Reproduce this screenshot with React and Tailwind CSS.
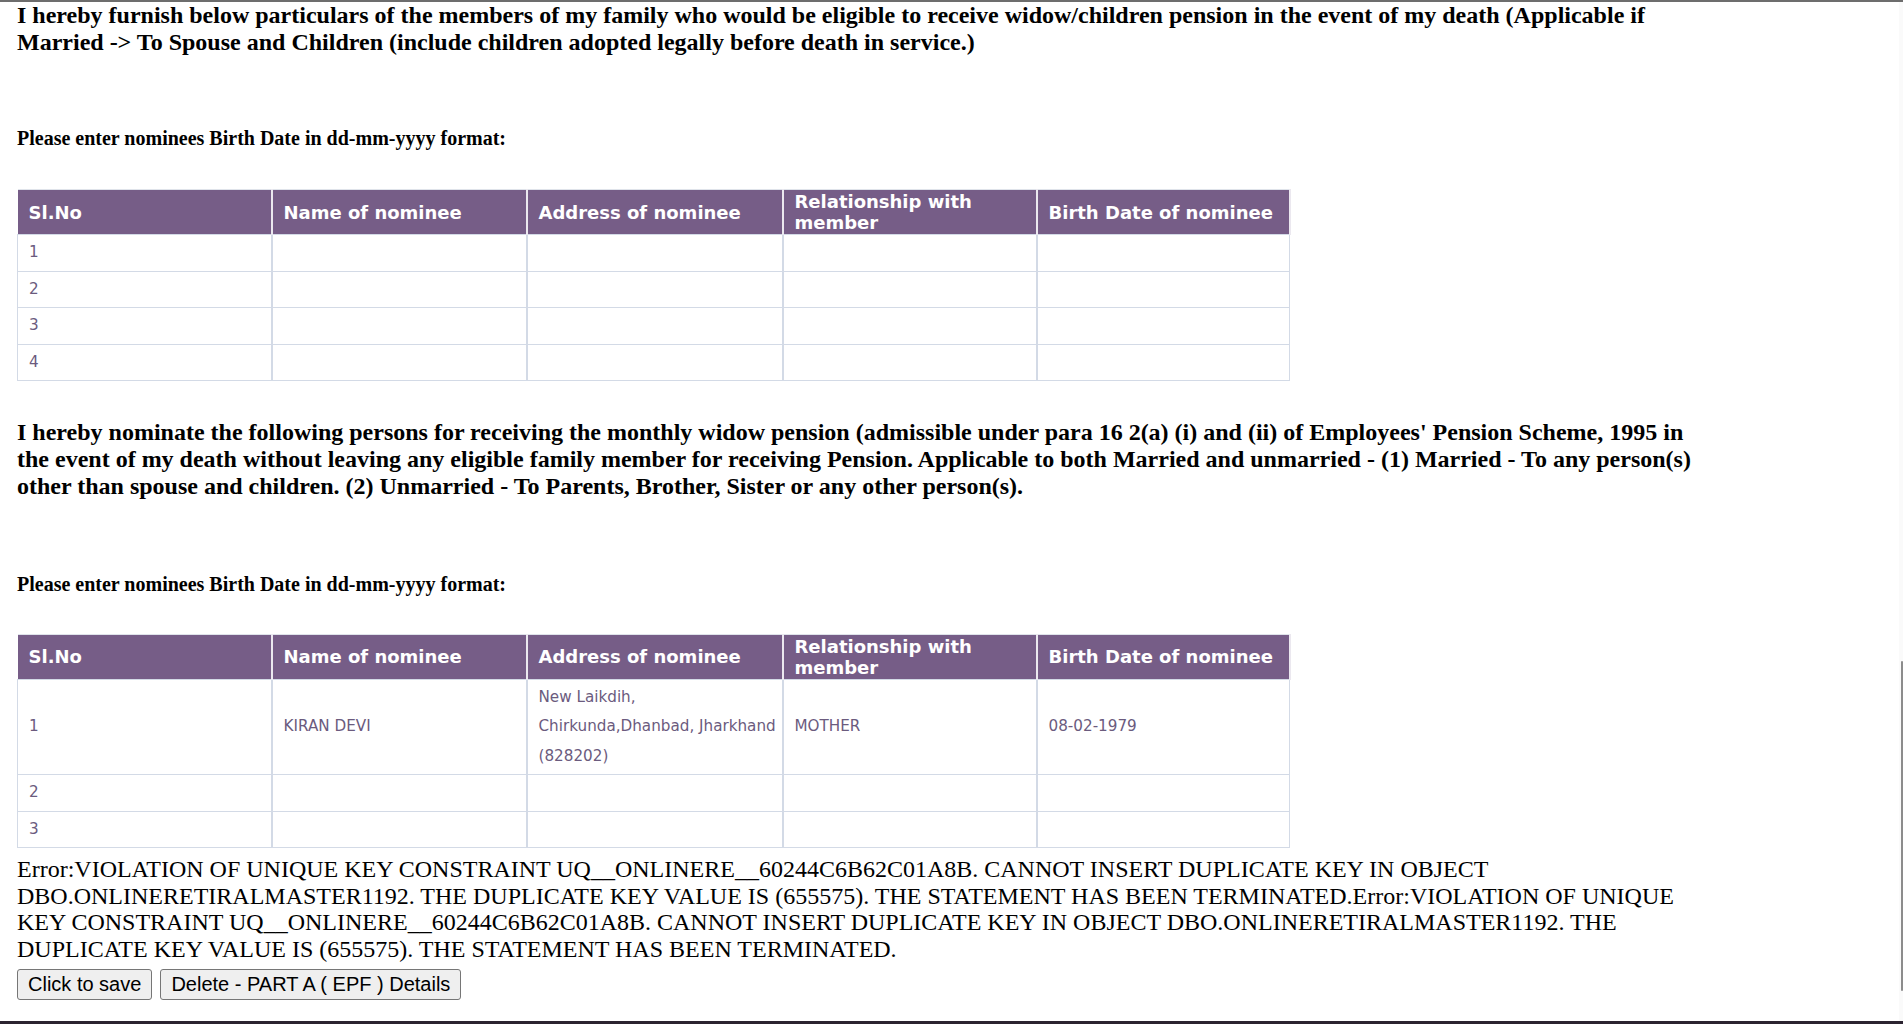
import React from "react";

const headers = [
  "Sl.No",
  "Name of nominee",
  "Address of nominee",
  "Relationship with member",
  "Birth Date of nominee",
];

const colWidths = ["w-[254px]", "w-[255px]", "w-[256px]", "w-[254px]", "w-[253px]"];

const firstRows = [
  { sl: "1" },
  { sl: "2" },
  { sl: "3" },
  { sl: "4" },
];

const secondRows = [
  {
    sl: "1",
    name: "KIRAN DEVI",
    address: ["New Laikdih,", "Chirkunda,Dhanbad, Jharkhand", "(828202)"],
    relation: "MOTHER",
    dob: "08-02-1979",
  },
  { sl: "2" },
  { sl: "3" },
];

const errorText =
  "Error:VIOLATION OF UNIQUE KEY CONSTRAINT UQ__ONLINERE__60244C6B62C01A8B. CANNOT INSERT DUPLICATE KEY IN OBJECT DBO.ONLINERETIRALMASTER1192. THE DUPLICATE KEY VALUE IS (655575). THE STATEMENT HAS BEEN TERMINATED.Error:VIOLATION OF UNIQUE KEY CONSTRAINT UQ__ONLINERE__60244C6B62C01A8B. CANNOT INSERT DUPLICATE KEY IN OBJECT DBO.ONLINERETIRALMASTER1192. THE DUPLICATE KEY VALUE IS (655575). THE STATEMENT HAS BEEN TERMINATED.";

const cell =
  "px-[11px] py-[3px] text-[15.2px] leading-[29.5px] text-[#6b5b7e] border-y border-x-2 border-[#d3dae6]";

const NomineeTable = ({ rows, className }) => {
  return (
    <table
      className={`w-[1272px] table-fixed border-collapse font-['DejaVu_Sans',sans-serif] ${className}`}
    >
      <colgroup>
        {colWidths.map((w, i) => (
          <col key={i} className={w} />
        ))}
      </colgroup>
      <thead>
        <tr>
          {headers.map((h) => (
            <th
              key={h}
              className="h-[45px] bg-[#765d87] text-white font-bold text-[18px] leading-[21px] text-left align-middle px-[11px] py-px border-x-2 border-x-[#ebe8ef] border-t border-t-[#dfe3ea] first:border-l-0"
            >
              {h}
            </th>
          ))}
        </tr>
      </thead>
      <tbody>
        {rows.map((row) => (
          <tr key={row.sl}>
            <td className={`${cell} first:border-l`}>{row.sl}</td>
            <td className={cell}>{row.name}</td>
            <td className={`${cell} whitespace-nowrap`}>
              {row.address &&
                row.address.map((line, i) => (
                  <React.Fragment key={i}>
                    {line}
                    {i < row.address.length - 1 && <br />}
                  </React.Fragment>
                ))}
            </td>
            <td className={cell}>{row.relation}</td>
            <td className={`${cell} last:border-r`}>{row.dob}</td>
          </tr>
        ))}
      </tbody>
    </table>
  );
};

export default function App() {
  return (
    <div className="h-[1024px] flex flex-col bg-white border-t-2 border-[#6d6d6d] overflow-hidden">
      <div className="flex flex-1 min-h-0">
        <main className="flex-1 pl-[17px] font-['Liberation_Serif',serif] text-black">
          <div className="w-[1690px]">
            {/* Family members section */}
            <p className="text-[24px] font-bold leading-[26.7px]">
              I hereby furnish below particulars of the members of my family who would be eligible to receive widow/children pension in the event of my death (Applicable if Married -&gt; To Spouse and Children (include children adopted legally before death in service.)
            </p>
            <p className="mt-[72px] text-[20px] font-bold leading-[23px]">
              Please enter nominees Birth Date in dd-mm-yyyy format:
            </p>
            <NomineeTable rows={firstRows} className="mt-[39px]" />

            {/* Other nominees section */}
            <p className="mt-[38px] text-[24px] font-bold leading-[26.7px]">
              I hereby nominate the following persons for receiving the monthly widow pension (admissible under para 16 2(a) (i) and (ii) of Employees' Pension Scheme, 1995 in the event of my death without leaving any eligible family member for receiving Pension. Applicable to both Married and unmarried - (1) Married - To any person(s) other than spouse and children. (2) Unmarried - To Parents, Brother, Sister or any other person(s).
            </p>
            <p className="mt-[73px] text-[20px] font-bold leading-[23px]">
              Please enter nominees Birth Date in dd-mm-yyyy format:
            </p>
            <NomineeTable rows={secondRows} className="mt-[38px]" />

            <p className="mt-[8px] text-[24px] leading-[26.7px]">{errorText}</p>

            <div className="mt-[6px] flex gap-2 font-['Liberation_Sans',Arial,sans-serif]">
              <button className="px-[10px] py-[3px] text-[20px] leading-[23px] text-black bg-[#efefef] border border-[#767676] rounded-[3px]">
                Click to save
              </button>
              <button className="px-[10px] py-[3px] text-[20px] leading-[23px] text-black bg-[#efefef] border border-[#767676] rounded-[3px]">
                Delete - PART A ( EPF ) Details
              </button>
            </div>
          </div>
        </main>
        <div className="w-[4px] bg-[#fafafa] flex justify-end pt-[659px]">
          <div className="w-[2px] h-[330px] bg-[#8c8c8c] rounded-full" />
        </div>
      </div>
      <div className="h-[3px] bg-[#2b2330]" />
    </div>
  );
}
